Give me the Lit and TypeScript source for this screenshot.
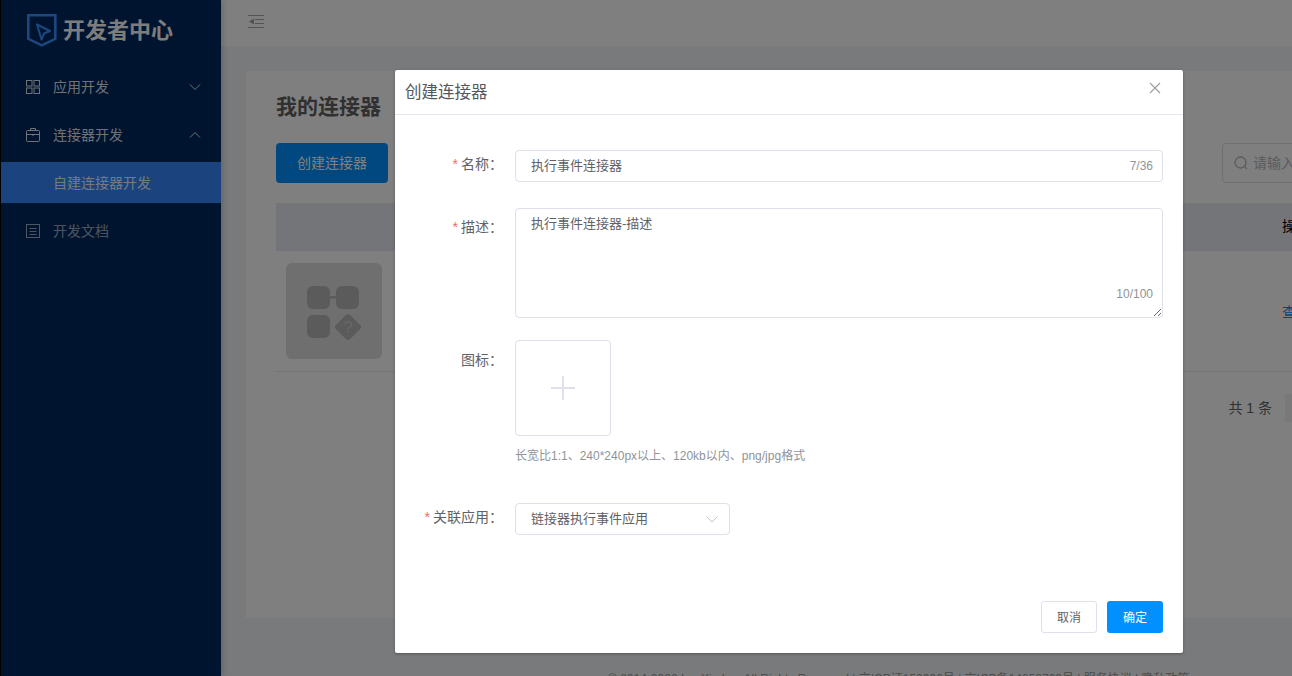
import { LitElement, html, css } from "lit";
import { customElement } from "lit/decorators.js";

@customElement("app-root")
export class AppRoot extends LitElement {
  static styles = css`
    :host {
      display: block;
      width: 1292px;
      height: 676px;
      overflow: hidden;
      position: relative;
      font-family: "Liberation Sans", "Noto Sans CJK SC", sans-serif;
      color: #606266;
    }
    .page { display: flex; height: 676px; background: #f2f4f6; }
    .side {
      flex: none; width: 220px; border-left: 1px solid #000;
      background: #00285e; color: #fff; font-size: 14px;
      box-shadow: 2px 0 6px rgba(0,0,0,.18);
      position: relative;
    }
    .logo { height: 63px; display: flex; align-items: flex-start; padding: 14px 0 0 26px; box-sizing: border-box; gap: 6px; }
    .logo span { font-size: 22px; font-weight: 700; line-height: 32px; color: #fff; margin-top: 1px; opacity: .98; }
    .item { height: 48px; display: flex; align-items: center; padding: 0 20px 0 24px; gap: 12px; color: rgba(255,255,255,.88); }
    .item .lab { flex: 1; padding-bottom: 2px; }
    .item.dim { color: rgba(255,255,255,.62); margin-top: 4px; }
    .sub { margin-top: 3px; height: 41px; box-sizing: border-box; padding: 0 0 2px 52px; display: flex; align-items: center; background: #3688ff; color: rgba(255,255,255,.92); }
    .main { flex: 1; min-width: 0; display: flex; flex-direction: column; overflow: hidden; }
    .top { flex: none; height: 46px; background: #fff; padding: 15px 0 0 27px; box-sizing: border-box; }
    .top svg { display: block; }
    .body { flex: none; height: 572px; padding: 25px 0 0 25px; box-sizing: border-box; }
    .card { width: 1246px; height: 547px; background: #fff; padding: 24px 30px 0; box-sizing: border-box; }
    .card h1 { margin: 0; font-size: 21px; line-height: 24px; font-weight: 700; color: #606060; }
    .tools { display: flex; justify-content: space-between; margin-top: 24px; }
    .create { width: 112px; height: 40px; box-sizing: border-box; padding-bottom: 2px; border-radius: 4px; background: #0090ff; color: #fff; font-size: 14px; display: flex; align-items: center; justify-content: center; }
    .search { width: 240px; height: 40px; box-sizing: border-box; border: 1px solid #dfe0ea; border-radius: 4px; display: flex; align-items: center; padding: 0 0 2px 10px; gap: 4px; color: #b4b6bb; font-size: 14px; }
    .search svg { margin-top: 2px; }
    .thead { margin-top: 20px; height: 48px; box-sizing: border-box; padding-bottom: 4px; background: #e8eaf3; display: flex; align-items: center; justify-content: flex-end; }
    .thead span, .row .act { width: 180px; font-size: 14px; }
    .thead span { color: #000; }
    .row { height: 121px; border-bottom: 1px solid #e8e8e8; box-sizing: border-box; display: flex; align-items: center; justify-content: space-between; padding-left: 10px; }
    .tile { width: 96px; height: 96px; border-radius: 6px; background: #dedede; }
    .tile svg { display: block; }
    .act { color: #0090ff; }
    .pager { margin-top: 22px; display: flex; justify-content: flex-end; align-items: center; gap: 13px; font-size: 14px; color: #606266; padding-right: 147px; }
    .pager span { padding-bottom: 2px; }
    .pager .num { width: 30px; height: 28px; background: #f2f2f2; border-radius: 2px; flex: none; }
    .foot { flex: 1; font-size: 12px; color: #9a9a9a; padding: 53px 0 0 387px; white-space: nowrap; line-height: 16px; }
    .mask { position: absolute; inset: 0; background: rgba(0,0,0,.5); }
    .modal {
      position: absolute; left: 395px; top: 70px; width: 788px; height: 583px;
      background: #fff; border-radius: 2px; box-shadow: 0 1px 3px rgba(0,0,0,.3);
      display: flex; flex-direction: column;
    }
    .mhead { flex: none; height: 45px; box-sizing: border-box; border-bottom: 1px solid #e4e6ef; display: flex; align-items: center; justify-content: space-between; padding: 0 22px 2px 10px; font-size: 16.5px; color: #55575e; }
    .mhead svg { margin-top: -6px; }
    .form { flex: 1; display: grid; grid-template-columns: 108px 648px; column-gap: 12px; align-content: start; padding-top: 35px; font-size: 13px; }
    .lbl { text-align: right; line-height: 28px; font-size: 14px; color: #606266; }
    .lbl.low { padding-top: 5px; }
    .lbl.up { line-height: 40px; }
    .lbl i { font-style: normal; color: #f56c6c; margin-right: 3px; }
    .ctl { border: 1px solid #dfe0ea; border-radius: 4px; box-sizing: border-box; color: #5f6167; }
    .name { height: 32px; display: flex; justify-content: space-between; align-items: center; padding: 0 9px 3px 15px; margin-bottom: 26px; }
    .cnt { font-size: 12px; color: #909399; }
    .name .cnt { padding-top: 3px; }
    .desc-wrap { position: relative; height: 110px; margin-bottom: 22px; }
    textarea { display: block; width: 100%; height: 110px; box-sizing: border-box; padding: 5px 15px; font: 13px/20px "Liberation Sans", "Noto Sans CJK SC", sans-serif; color: #5f6167; resize: vertical; outline: none; margin: 0; }
    .desc-wrap .cnt { position: absolute; right: 10px; bottom: 17px; }
    .upload { width: 96px; height: 96px; display: flex; align-items: center; justify-content: center; }
    .hint { font-size: 12px; color: #909399; line-height: 16px; margin-top: 12px; margin-bottom: 39px; }
    .sel { width: 215px; height: 32px; display: flex; justify-content: space-between; align-items: center; padding: 0 10px 3px 15px; }
    .sel svg { margin-top: 3px; }
    .mfoot { flex: none; display: flex; justify-content: flex-end; gap: 10px; padding: 0 20px 20px; font-size: 12px; }
    .btn { width: 56px; height: 32px; box-sizing: border-box; border-radius: 3px; display: flex; align-items: center; justify-content: center; padding-bottom: 1px; }
    .cancel { border: 1px solid #dfe0ea; color: #606266; }
    .ok { background: #0090ff; color: #fff; }
  `;

  private chev(up: boolean) {
    return html`<svg width="12" height="12" viewBox="0 0 12 12" fill="none" stroke="currentColor" stroke-width="1">
      <path d=${up ? "M1 8.5 6 3.5l5 5" : "M1 3.5 6 8.5l5-5"} /></svg>`;
  }

  render() {
    return html`
      <div class="page">
        <aside class="side">
          <div class="logo">
            <svg width="30" height="33" viewBox="0 0 30 33" fill="none" stroke="#3a90ff" stroke-width="2.6">
              <path d="M1.3 1.3h27v23.5L14.8 31.3 1.3 24.8z" />
              <path d="M10 10.5 23 17l-6 2.5-2.5 6z" stroke-width="2" stroke-linejoin="round" />
            </svg>
            <span>开发者中心</span>
          </div>
          <div class="item">
            <svg width="16" height="16" viewBox="0 0 16 16" fill="none" stroke="currentColor"><rect x="1.5" y="1.5" width="5.5" height="5.5"/><rect x="9" y="1.5" width="5.5" height="5.5"/><rect x="1.5" y="9" width="5.5" height="5.5"/><rect x="9" y="9" width="5.5" height="5.5"/></svg>
            <span class="lab">应用开发</span>${this.chev(false)}
          </div>
          <div class="item">
            <svg width="16" height="16" viewBox="0 0 16 16" fill="none" stroke="currentColor"><rect x="1.5" y="3.5" width="13" height="11" rx="1"/><path d="M5.5 3.5v-2h5v2M1.5 7.5h13M8 7v2"/></svg>
            <span class="lab">连接器开发</span>${this.chev(true)}
          </div>
          <div class="sub">自建连接器开发</div>
          <div class="item dim">
            <svg width="16" height="16" viewBox="0 0 16 16" fill="none" stroke="currentColor"><rect x="1.5" y="1.5" width="13" height="13"/><path d="M4.5 5.5h7M4.5 8.5h7M4.5 11.5h7"/></svg>
            <span class="lab">开发文档</span>
          </div>
        </aside>
        <div class="main">
          <div class="top">
            <svg width="17" height="13" viewBox="0 0 17 13" fill="none" stroke="#a8a8a8"><path d="M0 .5h16M7 4.5h9M7 8.5h9M0 12.5h16"/><path d="M1 6.5l5-3v6z" fill="#a0a0a0" stroke="none"/></svg>
          </div>
          <div class="body">
            <div class="card">
              <h1>我的连接器</h1>
              <div class="tools">
                <div class="create">创建连接器</div>
                <div class="search">
                  <svg width="16" height="16" viewBox="0 0 16 16" fill="none" stroke="#b4b6bb" stroke-width="1.3"><circle cx="7.5" cy="7.5" r="5.5"/><path d="M11.5 11.5 14 14"/></svg>
                  <span>请输入连接器名称</span>
                </div>
              </div>
              <div class="thead"><span>操作</span></div>
              <div class="row">
                <div class="tile">
                  <svg width="96" height="96" viewBox="0 0 96 96">
                    <g fill="#b6b6b8">
                      <rect x="21" y="23" width="23" height="23" rx="6"/>
                      <rect x="50" y="23" width="23" height="23" rx="6"/>
                      <rect x="43" y="33" width="8" height="2.5"/>
                      <rect x="21" y="52" width="23" height="23" rx="6"/>
                      <rect x="52" y="54" width="20" height="20" rx="3" transform="rotate(45 62 64)"/>
                    </g>
                    <text x="62" y="70" font-size="17" text-anchor="middle" fill="#cfcfd0" font-family="Liberation Sans">?</text>
                  </svg>
                </div>
                <span class="act">查看</span>
              </div>
              <div class="pager"><span>共 1 条</span><div class="num"></div></div>
            </div>
          </div>
          <div class="foot">© 2014-2022 LanXin Inc. All Rights Reserved | 京ICP证150090号 | 京ICP备14053703号 | 服务协议 | 隐私政策</div>
        </div>
      </div>
      <div class="mask"></div>
      <div class="modal">
        <div class="mhead">
          <span>创建连接器</span>
          <svg width="12" height="12" viewBox="0 0 12 12" fill="none" stroke="#9a9ca3" stroke-width="1.1"><path d="M1 1l10 10M11 1 1 11"/></svg>
        </div>
        <div class="form">
          <div class="lbl"><i>*</i>名称：</div>
          <div class="ctl name"><span>执行事件连接器</span><span class="cnt">7/36</span></div>
          <div class="lbl low"><i>*</i>描述：</div>
          <div class="desc-wrap">
            <textarea class="ctl" readonly>执行事件连接器-描述</textarea>
            <span class="cnt">10/100</span>
          </div>
          <div class="lbl up">图标：</div>
          <div>
            <div class="ctl upload">
              <svg width="26" height="26" viewBox="0 0 26 26" fill="none" stroke="#dfe0ea" stroke-width="2"><path d="M13 1v24M1 13h24"/></svg>
            </div>
            <div class="hint">长宽比1:1、240*240px以上、120kb以内、png/jpg格式</div>
          </div>
          <div class="lbl"><i>*</i>关联应用：</div>
          <div class="ctl sel">
            <span>链接器执行事件应用</span>
            <svg width="14" height="14" viewBox="0 0 14 14" fill="none" stroke="#bfc2c9"><path d="M1.5 4.5 7 10l5.5-5.5"/></svg>
          </div>
        </div>
        <div class="mfoot">
          <div class="btn cancel">取消</div>
          <div class="btn ok">确定</div>
        </div>
      </div>
    `;
  }
}
